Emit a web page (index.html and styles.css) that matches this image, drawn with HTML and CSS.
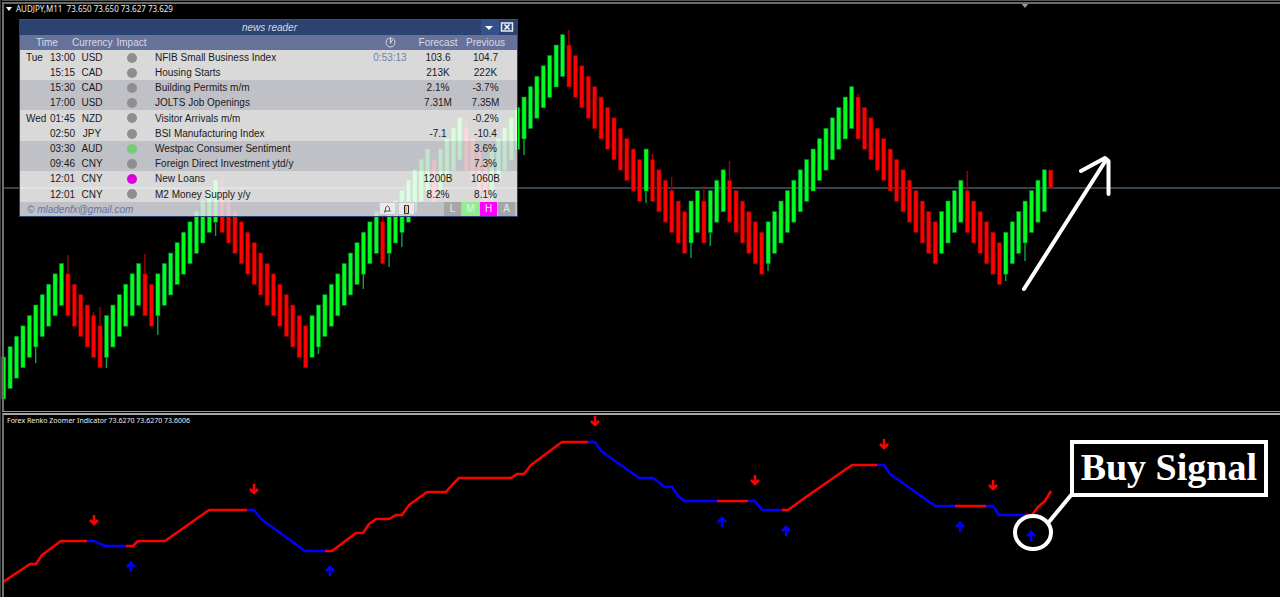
FILE: index.html
```html
<!DOCTYPE html>
<html lang="en">
<head>
<meta charset="utf-8">
<title>AUDJPY,M11</title>
<link rel="stylesheet" href="styles.css">
</head>
<body>
<main class="terminal">
  <section class="pane price">
    <svg class="plot" id="price-plot" viewBox="0 0 1280 411" preserveAspectRatio="xMinYMin meet" aria-hidden="true">
      <path class="price-line" d="M4 188H1280"/>
      <g id="candles"></g>
      <path class="shift-mark" d="M1021 3h8l-4 5z"/>
      <path class="trend-arrow" d="M1024 289L1106 160M1081 171L1105 158L1108.500 161V194"/>
    </svg>
    <header class="pane-title price-title">
      <svg class="caret" viewBox="0 0 6 4" aria-hidden="true"><path d="M0 0h6L3 4z"/></svg>
      <span>AUDJPY,M11&nbsp; 73.650 73.650 73.627 73.629</span>
    </header>

    <section class="news">
      <header class="news-bar">
        <h1 class="news-name">news reader</h1>
        <button class="bar-button fold" type="button" aria-label="Collapse"><svg viewBox="0 0 16 15"><path fill="#fff" d="M4 6h8l-4 4z"/></svg></button>
        <button class="bar-button" type="button" aria-label="Close"><svg viewBox="0 0 16 15"><path fill="#34508a" stroke="#e8ebf2" stroke-width="1.500" d="M2.500 3h11v8h-11z"/><path fill="none" stroke="#fff" stroke-width="1.500" d="M5.500 4.500l5 5M10.500 4.500l-5 5"/></svg></button>
      </header>
      <table class="news-table">
        <colgroup><col class="c-day"><col class="c-time"><col class="c-cur"><col class="c-impact"><col><col class="c-num"><col class="c-num"><col class="c-prev"></colgroup>
        <thead>
          <tr><th class="when" colspan="2">Time</th><th>Currency</th><th>Impact</th><th></th><th><svg class="clock" viewBox="0 0 11 11" role="img" aria-label="Countdown"><circle cx="5.500" cy="5.500" r="4.500"/><path d="M5.500 1v5.500M5.500 6l2-3"/></svg></th><th>Forecast</th><th class="prev">Previous</th></tr>
        </thead>
        <tbody>
          <tr><td class="day">Tue</td><td class="time">13:00</td><td>USD</td><td><i class="dot"></i></td><td class="event">NFIB Small Business Index</td><td class="count">0:53:13</td><td>103.6</td><td class="prev">104.7</td></tr>
          <tr><td></td><td class="time">15:15</td><td>CAD</td><td><i class="dot"></i></td><td class="event">Housing Starts</td><td></td><td>213K</td><td class="prev">222K</td></tr>
          <tr class="alt"><td></td><td class="time">15:30</td><td>CAD</td><td><i class="dot"></i></td><td class="event">Building Permits m/m</td><td></td><td>2.1%</td><td class="prev">-3.7%</td></tr>
          <tr class="alt"><td></td><td class="time">17:00</td><td>USD</td><td><i class="dot"></i></td><td class="event">JOLTS Job Openings</td><td></td><td>7.31M</td><td class="prev">7.35M</td></tr>
          <tr><td class="day">Wed</td><td class="time">01:45</td><td>NZD</td><td><i class="dot"></i></td><td class="event">Visitor Arrivals m/m</td><td></td><td></td><td class="prev">-0.2%</td></tr>
          <tr><td></td><td class="time">02:50</td><td>JPY</td><td><i class="dot"></i></td><td class="event">BSI Manufacturing Index</td><td></td><td>-7.1</td><td class="prev">-10.4</td></tr>
          <tr class="alt"><td></td><td class="time">03:30</td><td>AUD</td><td><i class="dot medium"></i></td><td class="event">Westpac Consumer Sentiment</td><td></td><td></td><td class="prev">3.6%</td></tr>
          <tr class="alt"><td></td><td class="time">09:46</td><td>CNY</td><td><i class="dot"></i></td><td class="event">Foreign Direct Investment ytd/y</td><td></td><td></td><td class="prev">7.3%</td></tr>
          <tr><td></td><td class="time">12:01</td><td>CNY</td><td><i class="dot high"></i></td><td class="event">New Loans</td><td></td><td>1200B</td><td class="prev">1060B</td></tr>
          <tr><td></td><td class="time">12:01</td><td>CNY</td><td><i class="dot"></i></td><td class="event">M2 Money Supply y/y</td><td></td><td>8.2%</td><td class="prev">8.1%</td></tr>
        </tbody>
      </table>
      <footer class="news-foot">
        <span class="author">© mladenfx@gmail.com</span>
        <div class="tools">
          <button class="tool" type="button" aria-label="Alerts"><svg viewBox="0 0 16 12"><path fill="none" stroke="#555" d="M5.500 7.500V5q2-4 4 0v2.500M4 8h7M4 9.500l2-1.500"/></svg></button>
          <button class="tool" type="button" aria-label="Layout"><svg viewBox="0 0 16 12"><path fill="#ddd" stroke="#222" d="M7.500 2.500h-2v8h2M8 2.500h1.500v8H8"/><path stroke="#d9902f" d="M7 3v7"/></svg></button>
        </div>
        <div class="filters">
          <button class="filter" type="button">L</button>
          <button class="filter medium" type="button">M</button>
          <button class="filter high" type="button">H</button>
          <button class="filter" type="button">A</button>
        </div>
      </footer>
    </section>
  </section>

  <section class="pane indicator">
    <svg class="plot" viewBox="0 415 1280 182" preserveAspectRatio="xMinYMin meet" aria-hidden="true">
      <g class="up-line">
        <path d="M3 582L30 564L36 564L42 555L61 541H87"/>
        <path d="M126 546H133L138 541H165L209 510H247"/>
        <path d="M325 551H332L356 533H363L369 524L376 519H389L396 515H402L409 505L427 492H446L453 484L459 478H511L517 474H524L531 465L562 442H588"/>
        <path d="M717 501H748"/><path d="M782 510H788L806 497L852 465H877"/><path d="M955 506H986"/>
        <path d="M1026 515H1032L1038 507L1045 501L1051 491"/>
      </g>
      <g class="down-line">
        <path d="M87 541H94L100 544L106 546H126"/>
        <path d="M247 510H254L261 519L305 551H325"/>
        <path d="M588 442H595L601 451L639 478H653L665 487H672L678 496L684 501H717"/>
        <path d="M748 501H755L762 510H782"/><path d="M877 465H884L890 474L935 506H955"/><path d="M986 506H993L999 515H1026"/>
      </g>
      <g id="sell-marks" class="sell-mark"></g>
      <g id="buy-marks" class="buy-mark"></g>
      <g class="callout-lead"><ellipse cx="1033" cy="532.500" rx="18" ry="16.500"/><path d="M1048 523L1072 494"/></g>
    </svg>
    <header class="pane-title indicator-title">Forex Renko Zoomer Indicator 73.6270 73.6270 73.6006</header>
    <p class="callout">Buy Signal</p>
  </section>
</main>
<script src="chart.js"></script>
</body>
</html>
```

FILE: styles.css
```css
* { box-sizing: border-box; }

body {
  margin: 0;
  background: #000;
  color: #fff;
  font-family: "Liberation Sans", Arial, sans-serif;
}

.terminal {
  display: grid;
  grid-template-rows: 411fr 186fr;
  height: 100vh;
  border-left: 1px solid #3a3a3a;
}

.pane {
  position: relative;
  min-height: 0;
  margin-left: 1px;
}

.pane::before {
  content: "";
  position: absolute;
  z-index: 1;
  inset: 0;
  border-left: 2px solid #6e6e6e;
  pointer-events: none;
}

.price::before {
  top: 1px;
  border-top: 2px solid #6a6c69;
}

.price { border-top: 1px solid #555; }

.indicator {
  border-top: 1px solid #999;
}

.indicator::before {
  top: 1px;
  border-top: 2px solid #a8a8a8;
}

/* The plots span the full window, under the frame */
.plot {
  position: absolute;
  left: -2px;
  bottom: 0;
  width: 100vw;
  overflow: hidden;
}

.pane-title {
  position: relative;
  color: #ececec;
  font: 8px/8px "Noto Sans", "Open Sans", sans-serif;
}

.price-title {
  display: flex;
  align-items: center;
  gap: 4px;
  padding: 4px 0 0 4px;
}

.indicator-title {
  padding: 5px 0 0 5px;
  font-size: 7px;
}

.caret { width: 6px; height: 4px; fill: #fff; }

.price-line { stroke: #36424b; stroke-width: 2; }
.shift-mark { fill: #8a9aa8; }
.trend-arrow { fill: none; stroke: #fff; stroke-width: 4; stroke-linecap: round; stroke-linejoin: round; }
.bull { fill: #00ff1e; stroke: #006a30; stroke-width: 0.6; }
.bear { fill: #ff0000; stroke: #700000; stroke-width: 0.6; }
.bull-wick { stroke: #00a850; stroke-width: 1.4; }
.bear-wick { stroke: #a00000; stroke-width: 1.4; }
.up-line, .down-line { fill: none; stroke: #ff0000; stroke-width: 2.5; stroke-linejoin: round; }
.down-line { stroke: #0000ff; }
.sell-mark, .buy-mark { fill: none; stroke: #ff0000; stroke-width: 2.5; }
.buy-mark { stroke: #0000ff; }
.callout-lead { fill: none; stroke: #fff; stroke-width: 4; }

.news {
  position: absolute;
  top: 18px;
  left: 17px;
  width: 499px;
  border: 1px solid #2c4372;
  border-top-color: #3d4f78;
  color: #1a1a1a;
  font-size: 10px;
  line-height: 15px;
}

.news-bar {
  display: flex;
  height: 15px;
  background: #2c4372;
}

.news-name {
  flex: 1;
  margin: 0;
  padding-left: 38px;
  color: #d5d9e2;
  font-size: 10px;
  font-style: italic;
  font-weight: 400;
  text-align: center;
}

button {
  margin: 0;
  padding: 0;
  border: 0;
  font: inherit;
}

button svg { display: block; width: 16px; }

.bar-button { width: 18px; background: #2c4372; }
.fold { background: #34508a; }

.news-table {
  width: 100%;
  border-collapse: collapse;
  table-layout: fixed;
}

.c-day { width: 28px; }
.c-time { width: 24px; }
.c-cur { width: 40px; }
.c-impact { width: 39px; }
.c-num { width: 48px; }
.c-prev { width: 55px; }

.news-table th,
.news-table td {
  height: 15px;
  padding: 0;
  text-align: center;
  white-space: nowrap;
}

.news-table thead { background: #667299; color: #d8dbe4; }
.news-table th { font-weight: 400; }
.news-table tbody tr { background: rgba(255, 255, 255, 0.85); }
.news-table tbody .alt { background: rgba(226, 227, 233, 0.85); }
.news-table tr:nth-child(5n) td { height: 16px; }

.news-table .when { padding-left: 2px; }
.news-table .day { padding-left: 6px; text-align: left; }
.news-table .time { padding-left: 2px; text-align: left; }
.news-table .event { padding-left: 4px; text-align: left; }
.news-table .prev { padding-right: 8px; }
.news-table .count { color: #7482a6; }

.clock {
  display: block;
  width: 11px;
  margin: 0 auto;
  fill: none;
  stroke: #d8dbe4;
}

.dot {
  display: block;
  width: 10px;
  height: 10px;
  margin: 0 auto;
  border-radius: 50%;
  background: #8e8e8e;
}

.dot.medium { background: #78cb78; }
.dot.high { background: #da00da; }

.news-foot {
  display: flex;
  height: 14px;
  padding: 0 2px 0 7px;
  background: rgba(226, 227, 233, 0.85);
}

.author {
  flex: 1;
  color: #6476a0;
  font-style: italic;
}

.tools { display: flex; gap: 2px; margin-right: 29px; }
.tool { width: 17px; height: 13px; border: 1px solid #c8c8cc; background: #e9e9ee; }
.filters { display: flex; gap: 1px; }
.filter {
  width: 17px;
  height: 14px;
  background: #a6a6a6;
  color: #e8e8e8;
  line-height: 14px;
}
.filter.medium { background: #90ee90; }
.filter.high { background: #ff00ff; }

.callout {
  position: absolute;
  top: 28px;
  right: 12px;
  margin: 0;
  padding: 2px 7px 4px;
  border: 4px solid #fff;
  background: #000;
  font: bold 38px/43px "Liberation Serif", "Times New Roman", serif;
}
```

FILE: chart.js
```javascript
const NS = "http://www.w3.org/2000/svg";
const BAR = 6.424;
const FIRST_X = 3.6;
const BRICK = 10.4;
const BASE_Y = 357;

// Runs of renko bricks: [direction, level of the first brick, number of bricks]
const runs = [
  [1, 0, 10], [-1, 8, 6], [1, 4, 6], [-1, 8, 2], [1, 8, 10], [-1, 16, 14],
  [1, 4, 11], [-1, 13, 1], [1, 14, 7], [-1, 19, 1], [1, 20, 4], [-1, 22, 4],
  [1, 20, 12], [-1, 30, 12], [1, 20, 1], [-1, 19, 6], [1, 15, 2], [-1, 15, 1],
  [1, 16, 3], [-1, 17, 6], [1, 13, 14], [-1, 25, 13], [1, 14, 4], [-1, 16, 6],
  [1, 12, 7]
];

// Bar index -> the y that its wick reaches
const wicks = {
  5: 363, 10: 255, 14: 312, 15: 307, 16: 368, 22: 254, 24: 335, 33: 236, 34: 172,
  49: 354, 56: 289, 59: 216, 60: 267, 62: 247, 69: 182, 72: 116, 76: 201, 81: 155, 88: 30,
  100: 203, 101: 154, 104: 177, 107: 258, 109: 186, 110: 246, 113: 161, 119: 271,
  133: 94, 150: 171, 156: 281, 159: 261
};

function add(parent, name, attrs) {
  const el = document.createElementNS(NS, name);
  for (const key in attrs) el.setAttribute(key, attrs[key]);
  parent.appendChild(el);
}

const candles = document.getElementById("candles");

function candle(index, dir, top, height) {
  const x = FIRST_X + index * BAR;
  const kind = dir > 0 ? "bull" : "bear";
  if (wicks[index]) {
    add(candles, "path", { class: kind + "-wick", d: `M${x} ${top + height / 2}V${wicks[index]}` });
  }
  add(candles, "rect", { class: kind, x: x - 2, y: top, width: 4.2, height: height });
}

let index = 0;
for (const [dir, level, count] of runs) {
  for (let n = 0; n < count; n++) {
    candle(index++, dir, BASE_Y - (level + dir * n) * BRICK, 42);
  }
}
candle(index, -1, 170, 18);

for (const [x, y] of [[94, 526], [254, 495], [595, 427], [755, 486], [884, 450], [993, 491]]) {
  add(document.getElementById("sell-marks"), "path", { d: `M${x} ${y - 11}V${y - 1}M${x - 4} ${y - 6}L${x} ${y - 2}L${x + 4} ${y - 6}` });
}
for (const [x, y] of [[131, 561], [330, 565], [722, 516], [786, 525], [960, 521], [1031, 530]]) {
  add(document.getElementById("buy-marks"), "path", { d: `M${x} ${y + 11}V${y + 1}M${x - 4} ${y + 6}L${x} ${y + 2}L${x + 4} ${y + 6}` });
}
```
